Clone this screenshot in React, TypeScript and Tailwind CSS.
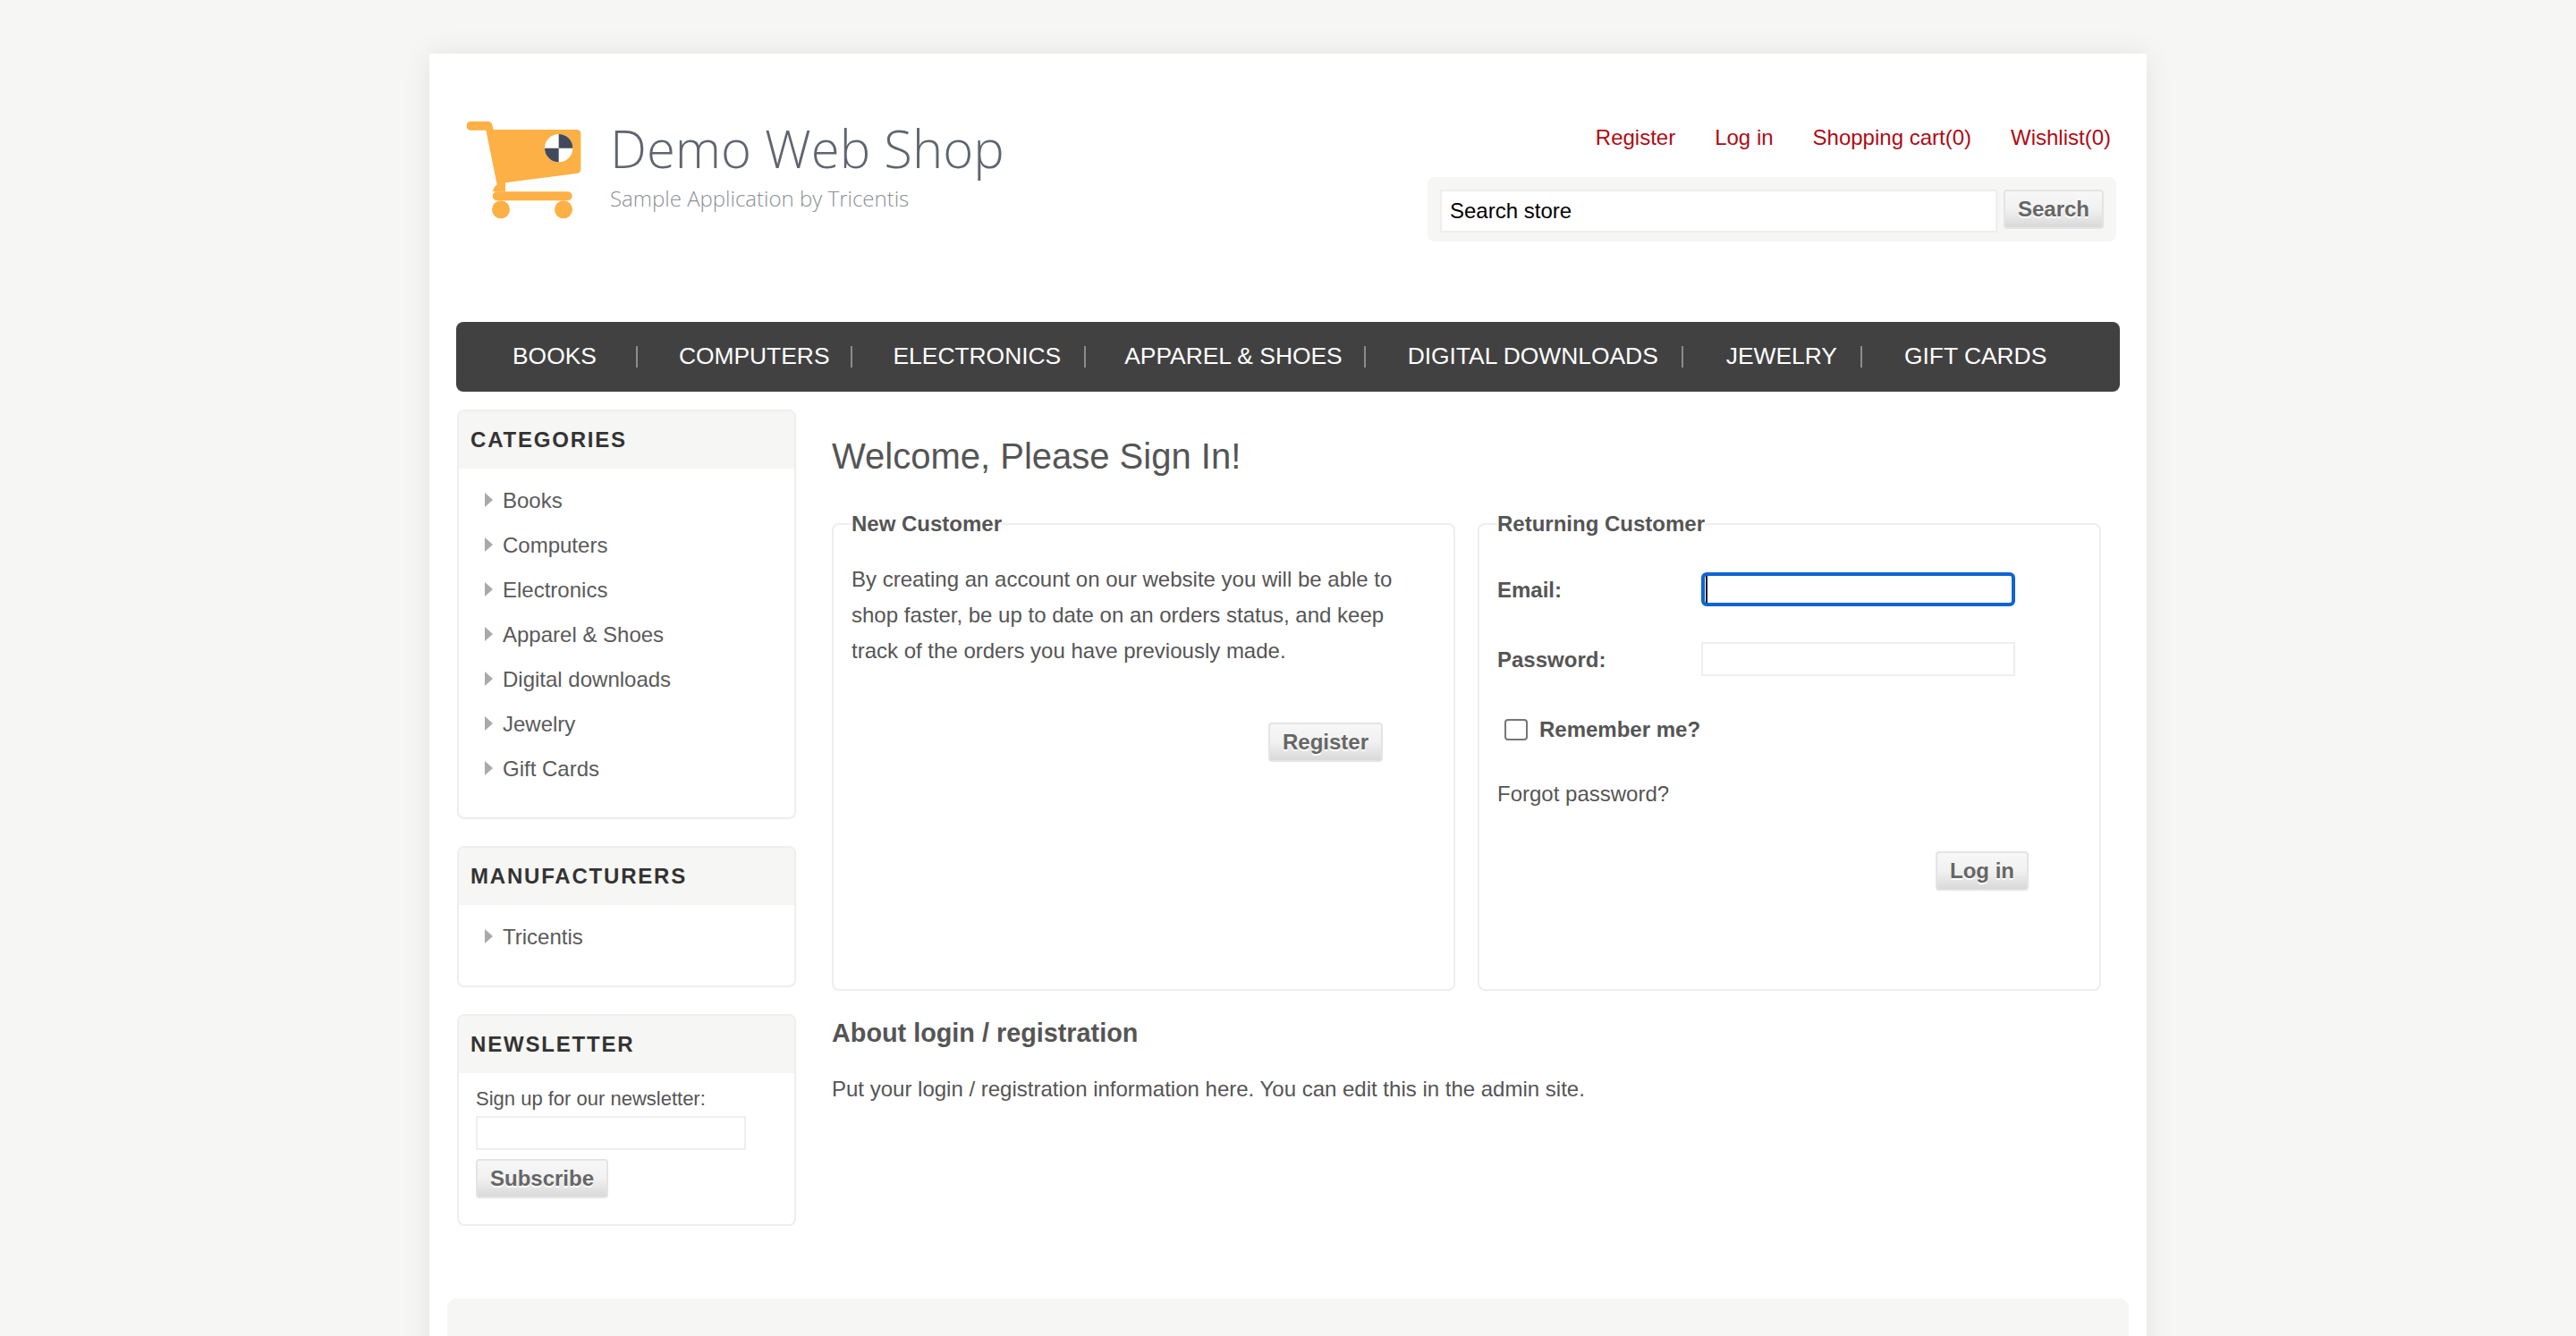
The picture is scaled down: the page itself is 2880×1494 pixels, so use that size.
import React from "react";

const navItems = [
  { label: "BOOKS", cls: "ml-[63px] mr-[44px]", after: "mr-[46px]" },
  { label: "COMPUTERS", cls: "mr-[23px]", after: "mr-[46px]" },
  { label: "ELECTRONICS", cls: "mr-[26px]", after: "mr-[43px]" },
  { label: "APPAREL & SHOES", cls: "mr-[24px]", after: "mr-[47px]" },
  { label: "DIGITAL DOWNLOADS", cls: "mr-[26px]", after: "mr-[48px]" },
  { label: "JEWELRY", cls: "mr-[26px]", after: "mr-[47px]" },
  { label: "GIFT CARDS", cls: "", after: "" },
];

const categories = ["Books", "Computers", "Electronics", "Apparel & Shoes", "Digital downloads", "Jewelry", "Gift Cards"];

function Cart() {
  return (
    <svg width="160" height="130" viewBox="0 0 480 390" className="shrink-0">
      <path d="M50 32 H106 Q118 32 121 44 L125 60 H404 Q418 60 418 74 V192 Q418 205 404 207 L165 238 L165 268 H122 Q128 250 137 244 L100 62 H50 Q35 62 35 47 Q35 32 50 32 Z" fill="#fdb045" />
      <rect x="122" y="268" width="267" height="30" rx="15" fill="#fdb045" />
      <circle cx="150" cy="328" r="30" fill="#fdb045" />
      <circle cx="360" cy="328" r="30" fill="#fdb045" />
      <circle cx="344" cy="122" r="47" fill="#fff" />
      <path d="M344 122 V75 A47 47 0 0 1 391 122 Z" fill="#414a5a" />
      <path d="M344 122 V169 A47 47 0 0 1 297 122 Z" fill="#414a5a" />
    </svg>
  );
}

function Arrow() {
  return (
    <svg width="9" height="16" viewBox="0 0 9 16" className="shrink-0">
      <path d="M0 0 L9 8 L0 16 Z" fill="#a9a9a9" />
    </svg>
  );
}

function SideBox({ title, children }: { title: string; children: React.ReactNode }) {
  return (
    <div className="rounded-[8px] border-2 border-[#eeeeee] bg-white">
      <div className="flex h-[64px] items-center rounded-t-[6px] bg-[#f6f6f4] pl-[13px] text-[24px] font-bold tracking-[1.8px] text-[#333333]">
        {title}
      </div>
      {children}
    </div>
  );
}

function SideLink({ label }: { label: string }) {
  return (
    <li className="flex h-[50px] items-center gap-[11px] pl-[29px] text-[24px] text-[#5a5a5a]">
      <Arrow />
      <a href="#" className="pt-px">
        {label}
      </a>
    </li>
  );
}

function GrayButton({ label, className }: { label: string; className: string }) {
  return (
    <button
      type="button"
      className={
        "h-[44px] rounded-[4px] border-2 border-[#e4e4e4] bg-gradient-to-b from-[#f7f7f7] via-[#f1f1f1] to-[#d9d9d9] text-[24px] font-bold text-[#666666] [text-shadow:0_2px_0_#fff] " +
        className
      }
    >
      {label}
    </button>
  );
}

export default function App() {
  return (
    <div className="h-[1494px] overflow-hidden bg-[#f6f6f4] pt-[60px] font-['Liberation_Sans',Arial,sans-serif] text-[24px] text-[#555555]">
      <div className="mx-auto min-h-[1500px] w-[1920px] bg-white px-[30px] shadow-[0_0_30px_rgba(0,0,0,0.08)]">
        {/* header */}
        <div className="flex h-[300px] justify-between">
          <div className="mt-[65px] flex items-start">
            <Cart />
            <div className="ml-[12px] pt-[6px] font-['Open_Sans',sans-serif] font-light">
              <div className="text-[58px] leading-[70px] text-[#5f6570]">Demo Web Shop</div>
              <div className="mt-[6px] text-[24px] leading-[30px] text-[#8b8f95]">Sample Application by Tricentis</div>
            </div>
          </div>
          <div className="flex flex-col items-end">
            <div className="mr-[10px] mt-[80px] flex gap-[44px] leading-[28px] text-[#b00a14]">
              <a href="#">Register</a>
              <a href="#">Log in</a>
              <a href="#">Shopping cart(0)</a>
              <a href="#">Wishlist(0)</a>
            </div>
            <div className="mr-[4px] mt-[30px] flex h-[72px] w-[770px] items-start gap-[7px] rounded-[8px] bg-[#f6f6f4] pl-[14px] pt-[14px]">
              <input
                type="text"
                defaultValue="Search store"
                className="h-[48px] w-[623px] border-2 border-[#eeeeee] bg-white pl-[9px] text-[24px] text-black outline-none"
              />
              <GrayButton label="Search" className="w-[112px]" />
            </div>
          </div>
        </div>

        {/* nav */}
        <nav className="flex h-[78px] items-center rounded-[8px] bg-[#414141] text-[26.4px] text-white">
          {navItems.map((item) => (
            <React.Fragment key={item.label}>
              <a href="#" className={item.cls}>
                {item.label}
              </a>
              {item.after && <span className={"h-[24px] w-[2px] bg-[#8c8c8c] " + item.after} />}
            </React.Fragment>
          ))}
        </nav>

        <div className="mt-[20px] flex">
          {/* sidebar */}
          <div className="ml-px flex w-[379px] shrink-0 flex-col gap-[30px]">
            <SideBox title="CATEGORIES">
              <ul className="pb-[30px] pt-[10px]">
                {categories.map((c) => (
                  <SideLink key={c} label={c} />
                ))}
              </ul>
            </SideBox>
            <SideBox title="MANUFACTURERS">
              <ul className="pb-[30px] pt-[10px]">
                <SideLink label="Tricentis" />
              </ul>
            </SideBox>
            <SideBox title="NEWSLETTER">
              <div className="px-[19px] pb-[29px] pt-[15px]">
                <div className="text-[22px] leading-[28px]">Sign up for our newsletter:</div>
                <input type="text" className="mt-[5px] block h-[38px] w-[302px] border-2 border-[#eeeeee] bg-white outline-none" />
                <GrayButton label="Subscribe" className="mt-[10px] block w-[148px]" />
              </div>
            </SideBox>
          </div>

          {/* main */}
          <div className="ml-[40px] flex-1">
            <h1 className="mt-[28px] text-[40px] leading-[48px]">Welcome, Please Sign In!</h1>
            <div className="mt-[38px] flex gap-[25px]">
              <fieldset className="h-[536px] w-[697px] rounded-[8px] border-2 border-[#eeeeee] pl-[20px] pr-[19px]">
                <legend className="text-[24px] font-bold leading-[28px]">New Customer</legend>
                <p className="mt-[28px] w-[630px] leading-[40px]">
                  By creating an account on our website you will be able to shop faster, be up to date on an orders status, and keep track of the orders you have previously made.
                </p>
                <div className="mr-[60px] mt-[60px] flex justify-end">
                  <GrayButton label="Register" className="w-[128px]" />
                </div>
              </fieldset>
              <fieldset className="h-[536px] w-[697px] rounded-[8px] border-2 border-[#eeeeee] pl-[20px] pr-[19px]">
                <legend className="text-[24px] font-bold leading-[28px]">Returning Customer</legend>
                <div className="mt-[40px] flex h-[38px] items-center font-bold">
                  <label className="w-[228px] pt-px">Email:</label>
                  <div className="relative">
                    <input type="text" className="block h-[38px] w-[351px] rounded-[6px] border-4 border-[#0f64d2] bg-white outline-none" />
                    <span className="absolute left-[5px] top-[4px] h-[30px] w-[2px] bg-[#111111]" />
                  </div>
                </div>
                <div className="mt-[40px] flex h-[38px] items-center font-bold">
                  <label className="w-[228px] pt-px">Password:</label>
                  <input type="password" className="block h-[38px] w-[351px] border-2 border-[#eeeeee] bg-white outline-none" />
                </div>
                <div className="mt-[40px] flex h-[40px] items-center pl-[8px] font-bold">
                  <input type="checkbox" className="h-[24px] w-[26px] appearance-none rounded-[4px] border-2 border-[#767676] bg-white" />
                  <label className="ml-[13px]">Remember me?</label>
                </div>
                <div className="mt-[32px] leading-[40px]">
                  <a href="#">Forgot password?</a>
                </div>
                <div className="mr-[60px] mt-[44px] flex justify-end">
                  <GrayButton label="Log in" className="w-[104px]" />
                </div>
              </fieldset>
            </div>
            <h2 className="mt-[30px] text-[28.8px] font-bold leading-[34px]">About login / registration</h2>
            <p className="mt-[32px] leading-[28px]">Put your login / registration information here. You can edit this in the admin site.</p>
          </div>
        </div>

        {/* footer */}
        <div className="-mx-[10px] mt-[81px] h-[200px] rounded-t-[10px] bg-[#f6f6f4]" />
      </div>
    </div>
  );
}
